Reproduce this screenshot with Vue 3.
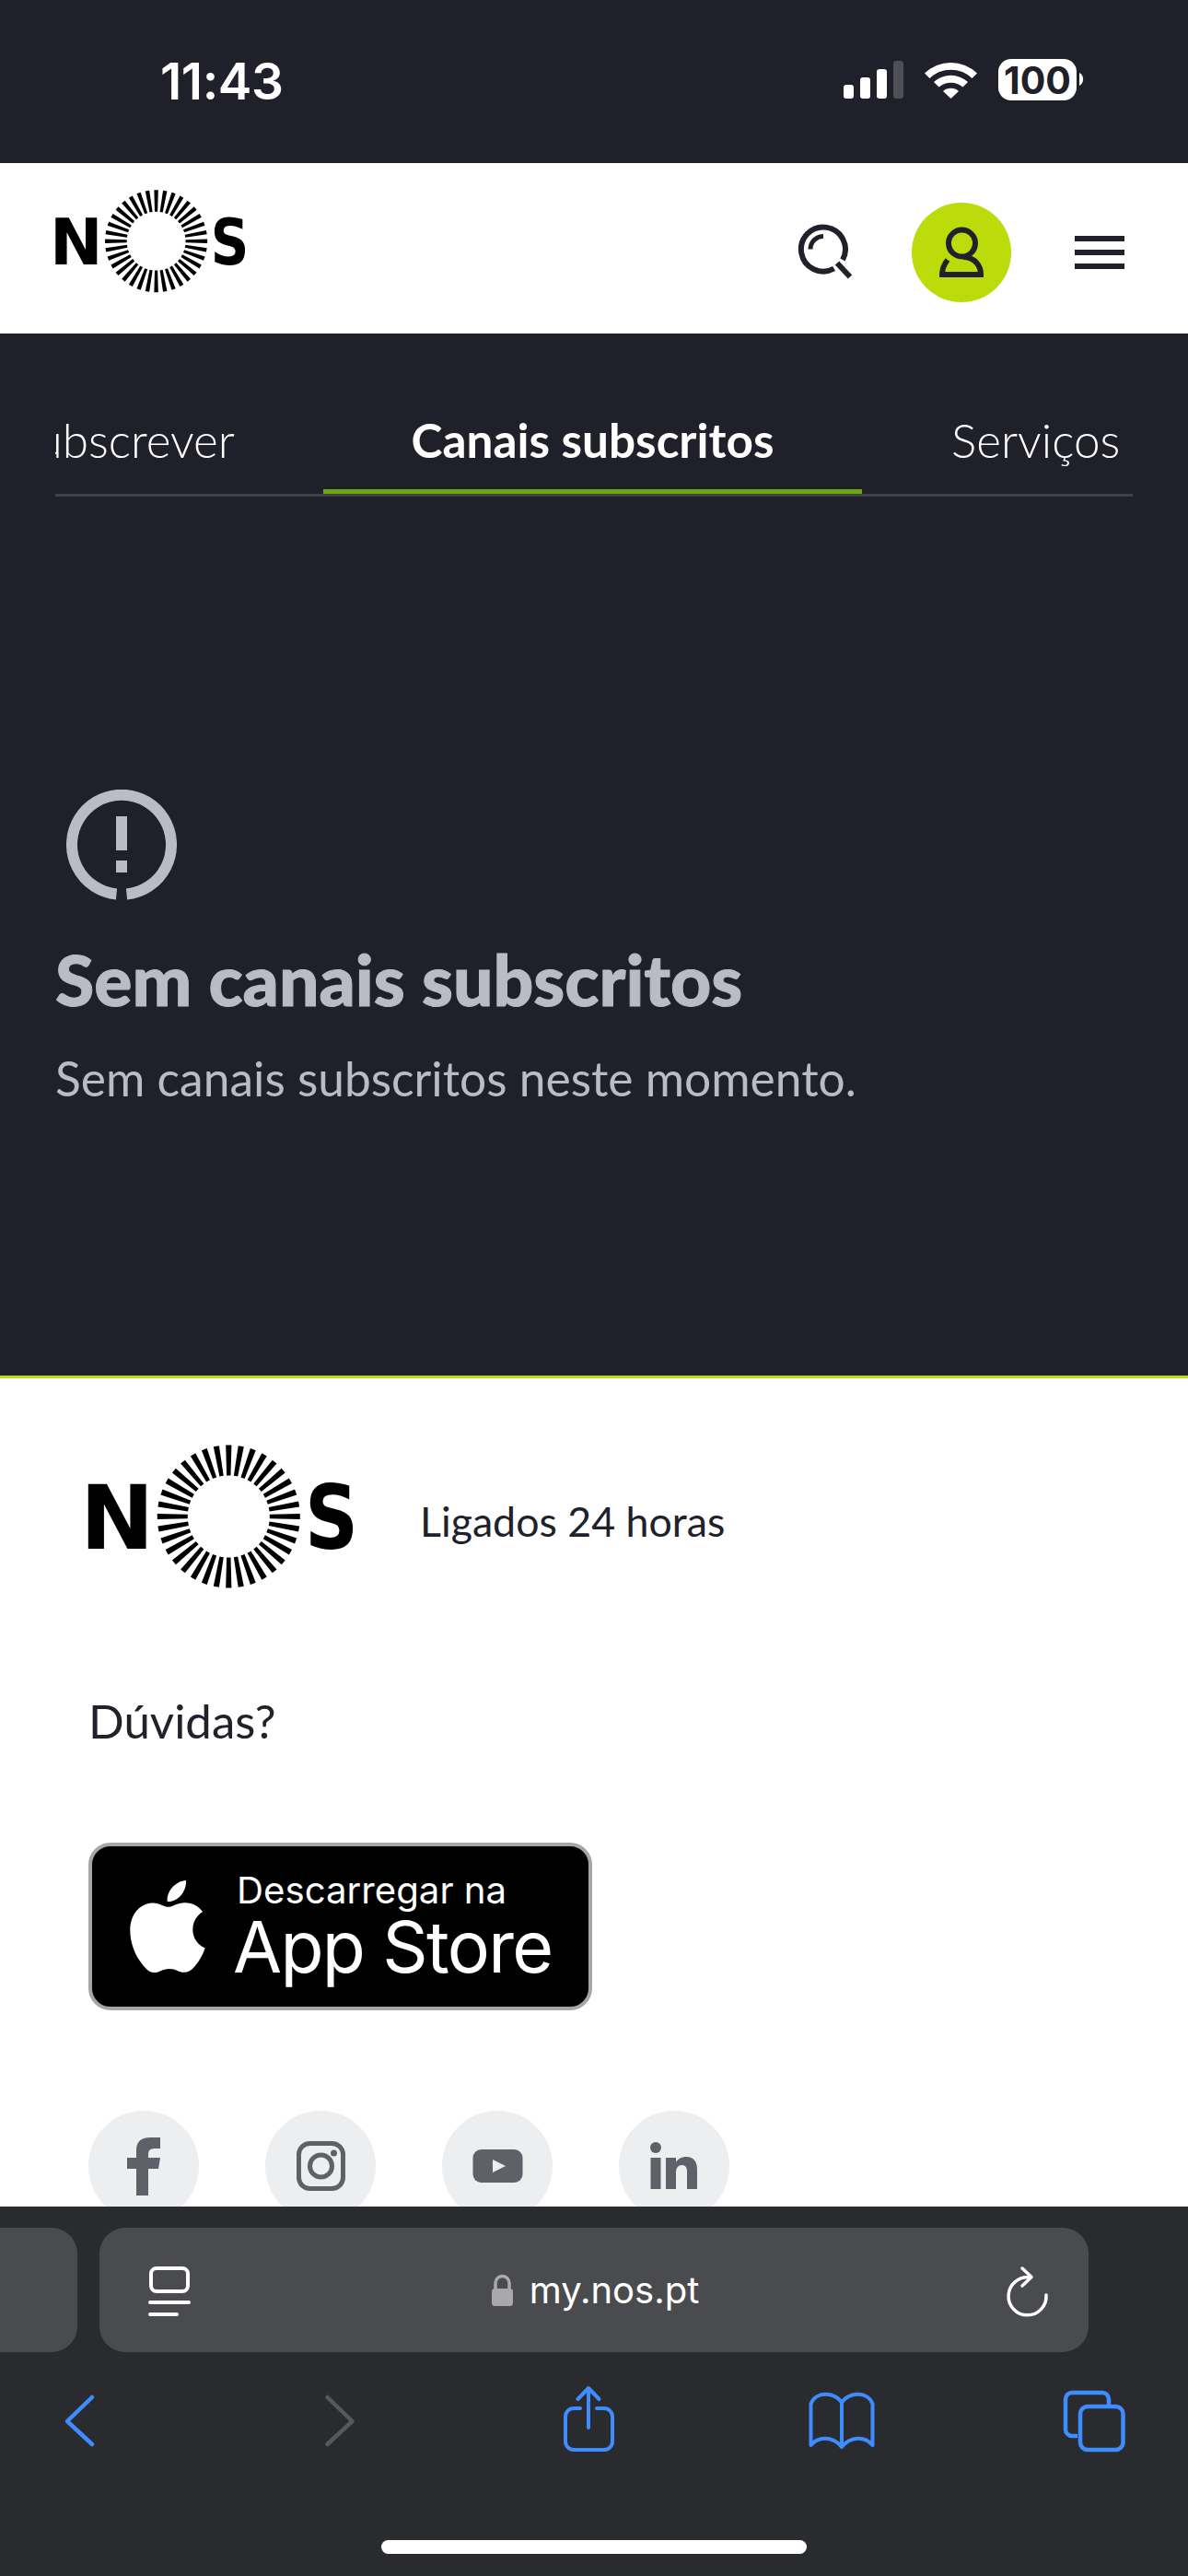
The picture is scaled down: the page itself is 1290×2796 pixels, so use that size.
<script setup>
const cx = 248.3
const cy = 1646
const count = 36
const rays = Array.from({ length: count }, (_, i) => {
  const a = (i * 2 * Math.PI) / count
  const pt = (r, w) => {
    const x = cx + Math.sin(a) * r + Math.cos(a) * w
    const y = cy - Math.cos(a) * r + Math.sin(a) * w
    return x.toFixed(2) + ',' + y.toFixed(2)
  }
  return [pt(44.5, -2.2), pt(77.5, -3.1), pt(77.5, 3.1), pt(44.5, 2.2)].join(' ')
})
const socials = ['facebook', 'instagram', 'youtube', 'linkedin']
</script>

<template>
  <div class="page">
    <div class="status">
      <span class="time">11:43</span>
      <svg class="status-icons" viewBox="910 60 270 52" width="270" height="52">
        <rect x="916" y="92" width="11" height="15" rx="3" fill="#fff" />
        <rect x="934" y="84" width="11" height="23" rx="3" fill="#fff" />
        <rect x="952" y="75" width="11" height="32" rx="3" fill="#fff" />
        <rect x="970" y="66" width="11" height="41" rx="3" fill="#4e4f54" />
        <path d="M1004 79.5A41 41 0 0 1 1061 79.5L1055.500 85A33 33 0 0 0 1009.500 85Z" fill="#fff" />
        <path d="M1014 89A27.500 27.500 0 0 1 1051 89L1045.500 94.500A20 20 0 0 0 1019.500 94.500Z" fill="#fff" />
        <path d="M1024 99A13 13 0 0 1 1041 99L1032.500 107Z" fill="#fff" />
        <rect x="1084" y="64" width="85" height="45" rx="14" fill="#fff" />
        <path d="M1172 79A8 8 0 0 1 1172 93Z" fill="#fff" />
        <text x="1126.500" y="101.500" text-anchor="middle" class="battery-text">100</text>
      </svg>
    </div>

    <header class="topbar">
      <svg class="logo logo-small" viewBox="80 1560 320 170">
        <text x="87" y="1681" class="logo-letter">N</text>
        <polygon v-for="(r, i) in rays" :key="i" :points="r" fill="#000" />
        <text x="331" y="1681" class="logo-letter" textLength="58" lengthAdjust="spacingAndGlyphs">S</text>
      </svg>
      <div class="top-actions">
        <svg class="search" viewBox="860 238 70 70" width="70" height="70" fill="none" stroke="#20212b" stroke-width="6">
          <path d="M915 282A24 24 0 1 0 905.600 291.500" />
          <path d="M880 270.500A14 14 0 0 1 894 256.500" stroke-width="5" />
          <path d="M909 285.500L923 300.500" />
        </svg>
        <div class="avatar">
          <svg viewBox="990 220 108 108" width="108" height="108" fill="none" stroke="#20212b" stroke-width="6">
            <circle cx="1044.500" cy="264" r="14.500" />
            <path d="M1046 279C1058 279 1065 288 1065 298H1023C1023 292 1025 287 1029 282" />
          </svg>
        </div>
        <div class="burger"><i></i><i></i><i></i></div>
      </div>
    </header>

    <main class="main">
      <nav class="tabs">
        <div class="tab tab-first"><span>Por subscrever</span></div>
        <div class="tab tab-active"><span>Canais subscritos</span></div>
        <div class="tab"><span>Serviços</span></div>
      </nav>
      <svg class="alert" viewBox="72 857 120 120" width="120" height="120" fill="none" stroke="#babbc5" stroke-width="12">
        <path d="M126.500 970.500A54 54 0 1 1 137.500 970.500" />
        <rect x="126" y="886" width="12" height="37" fill="#babbc5" stroke="none" />
        <rect x="126" y="934" width="12" height="13" fill="#babbc5" stroke="none" />
      </svg>
      <h2 class="empty-title">Sem canais subscritos</h2>
      <p class="empty-text">Sem canais subscritos neste momento.</p>
    </main>

    <footer class="footer">
      <div class="brand">
        <svg class="logo logo-large" viewBox="80 1560 320 170">
          <text x="87" y="1681" class="logo-letter">N</text>
          <polygon v-for="(r, i) in rays" :key="i" :points="r" fill="#000" />
          <text x="331" y="1681" class="logo-letter" textLength="58" lengthAdjust="spacingAndGlyphs">S</text>
        </svg>
        <span class="tagline">Ligados 24 horas</span>
      </div>
      <div class="help">Dúvidas?</div>
      <div class="store">
        <svg viewBox="0 0 814 1000" width="82" height="100" fill="#fff">
          <path d="M788.1 340.9c-5.8 4.5-108.2 62.2-108.2 190.5 0 148.400 130.300 200.900 134.200 202.200-.6 3.200-20.700 71.900-68.700 141.900-42.800 61.600-87.500 123.100-155.500 123.100s-85.500-39.500-164-39.500c-76.500 0-103.700 40.800-165.900 40.800s-105.600-57-155.500-127C46.700 790.700 0 663 0 541.800c0-194.400 126.400-297.500 250.800-297.500 66.100 0 121.200 43.400 162.700 43.400 39.500 0 101.100-46 176.300-46 28.500 0 130.900 2.600 198.300 99.200zm-234-181.500c31.100-36.900 53.100-88.100 53.100-139.300 0-7.100-.6-14.300-1.900-20.100-50.600 1.900-110.800 33.700-147.100 75.800-28.500 32.400-55.100 83.600-55.100 135.500 0 7.800 1.300 15.600 1.900 18.100 3.200.6 8.400 1.300 13.600 1.300 45.400 0 102.500-30.400 135.500-71.300z" />
        </svg>
        <div class="store-text">
          <span class="store-small">Descarregar na</span>
          <span class="store-big">App Store</span>
        </div>
      </div>
      <div class="socials">
        <div v-for="s in socials" :key="s" class="social">
          <svg v-if="s === 'facebook'" viewBox="96 2291 120 120" width="120" height="120" fill="#5f6068">
            <path d="M148 2383V2354H138V2342H148V2334Q148 2320 163 2320H174V2332H167Q161 2332 161 2338V2342H174L172 2354H161V2383Z" />
          </svg>
          <svg v-else-if="s === 'instagram'" viewBox="288 2291 120 120" width="120" height="120" fill="none" stroke="#5f6068" stroke-width="5">
            <rect x="324.500" y="2326.500" width="48" height="49" rx="12" />
            <circle cx="348.500" cy="2351" r="12" />
            <circle cx="362.500" cy="2337" r="3.500" fill="#5f6068" stroke="none" />
          </svg>
          <svg v-else-if="s === 'youtube'" viewBox="480 2291 120 120" width="120" height="120">
            <rect x="513.500" y="2333" width="54" height="36" rx="9" fill="#5f6068" />
            <path d="M535 2344L549 2351L535 2358Z" fill="#edeef0" />
          </svg>
          <svg v-else viewBox="672 2291 120 120" width="120" height="120" fill="#5f6068">
            <circle cx="712" cy="2331" r="6" />
            <rect x="706.500" y="2342" width="11" height="34" />
            <path d="M723 2342H734V2347C736 2343 741 2341 745 2341C753 2341 757 2346 757 2355V2376H746V2357C746 2352 744 2350 740.500 2350C736.500 2350 734 2353 734 2358V2376H723Z" />
          </svg>
        </div>
      </div>
    </footer>

    <div class="browser">
      <div class="address-row">
        <div class="prev-tab"></div>
        <div class="address">
          <svg viewBox="150 2445 70 80" width="70" height="80" fill="none" stroke="#fff" stroke-width="4" stroke-linecap="round">
            <rect x="164" y="2461" width="40" height="25" rx="6" />
            <path d="M163 2498H205" />
            <path d="M163 2511H192" />
          </svg>
          <div class="url">
            <svg viewBox="530 2464 30 38" width="30" height="38">
              <path d="M537 2482V2475A7.500 7.500 0 0 1 552 2475V2482" fill="none" stroke="#a9a9ad" stroke-width="3.500" />
              <rect x="533" y="2481" width="23" height="19" rx="3.500" fill="#a9a9ad" />
            </svg>
            <span>my.nos.pt</span>
          </div>
          <svg viewBox="1086 2450 60 64" width="60" height="64" fill="none" stroke="#fff" stroke-width="3.500" stroke-linecap="round" stroke-linejoin="round">
            <path d="M1118 2468A20.500 20.500 0 1 0 1136 2487" />
            <path d="M1110 2458L1120 2467.500L1110 2477" />
          </svg>
        </div>
      </div>
      <div class="nav-row">
        <svg viewBox="46 2588 80 80" width="80" height="80" fill="none" stroke="#3f8cff" stroke-width="4.500" stroke-linecap="round" stroke-linejoin="round">
          <path d="M100 2602L73 2628L100 2653" />
        </svg>
        <svg viewBox="321.500 2588 80 80" width="80" height="80" fill="none" stroke="#57585c" stroke-width="4.500" stroke-linecap="round" stroke-linejoin="round">
          <path d="M355 2602L382 2628L355 2653" />
        </svg>
        <svg viewBox="597 2588 80 80" width="80" height="80" fill="none" stroke="#3f8cff" stroke-width="4" stroke-linecap="round" stroke-linejoin="round">
          <path d="M630 2614H623A9 9 0 0 0 614 2623V2650A9 9 0 0 0 623 2659H656A9 9 0 0 0 665 2650V2623A9 9 0 0 0 656 2614H648" />
          <path d="M639 2635V2593" />
          <path d="M627.500 2604L639 2592L650.500 2604" />
        </svg>
        <svg viewBox="872.500 2588 80 80" width="80" height="80" fill="none" stroke="#3f8cff" stroke-width="4" stroke-linecap="round" stroke-linejoin="round">
          <path d="M913.500 2608V2655" />
          <path d="M913.500 2608C908 2597 886 2594 880 2609V2654C888 2644 904 2644 913.500 2656C923 2644 939 2644 947 2654V2609C941 2594 919 2597 913.500 2608Z" />
        </svg>
        <svg viewBox="1148 2588 80 80" width="80" height="80" fill="none" stroke="#3f8cff" stroke-width="4.500" stroke-linejoin="round">
          <path d="M1170 2644H1164A7 7 0 0 1 1157 2637V2604A7 7 0 0 1 1164 2597H1197A7 7 0 0 1 1204 2604V2611" />
          <rect x="1173" y="2612" width="46.500" height="47" rx="8" />
        </svg>
      </div>
      <div class="home-indicator"></div>
    </div>
  </div>
</template>

<style>
html,
body {
  margin: 0;
  background: #1f2029;
}
</style>

<style scoped>
.page {
  width: 1290px;
  height: 2796px;
  overflow: hidden;
  font-family: Lato, "Open Sans", sans-serif;
  background: #1f2029;
}
svg {
  display: block;
  flex-shrink: 0;
}
.status {
  height: 177px;
  box-sizing: border-box;
  display: flex;
  justify-content: space-between;
  padding: 60px 110px 0 174px;
  background: #1f2029;
}
.time {
  font-family: Inter, sans-serif;
  font-size: 55px;
  font-weight: 600;
  line-height: 56px;
  color: #fff;
  letter-spacing: -0.4px;
}
.battery-text {
  font-family: Inter, sans-serif;
  font-size: 41px;
  font-weight: 700;
  fill: #1f2029;
}
.topbar {
  height: 185px;
  box-sizing: border-box;
  background: #fff;
  display: flex;
  justify-content: space-between;
  padding: 23px 69px 0 49.4px;
}
.logo-small {
  width: 229.3px;
  height: 122px;
}
.logo-large {
  width: 320px;
  height: 170px;
}
.logo-letter {
  font-family: "DejaVu Sans", sans-serif;
  font-weight: 700;
  font-size: 96px;
  fill: #000;
}
.top-actions {
  display: flex;
  align-items: flex-start;
}
.search {
  margin-top: 38px;
}
.avatar {
  width: 108px;
  height: 108px;
  border-radius: 50%;
  background: #bcdb0a;
  margin-top: 20px;
  margin-left: 60px;
}
.burger {
  width: 54px;
  margin-left: 69px;
  margin-top: 56px;
  display: flex;
  flex-direction: column;
  gap: 9px;
}
.burger i {
  display: block;
  height: 6px;
  background: #20212b;
}
.main {
  height: 1134px;
  box-sizing: border-box;
  background: #1f2029;
  padding: 68px 60px 0;
  border-bottom: 3px solid #bcdb0a;
}
.tabs {
  display: flex;
  height: 109px;
  box-sizing: border-box;
  border-bottom: 3px solid #3f4048;
  overflow: hidden;
  font-size: 51.3px;
  line-height: 60px;
  color: #fff;
  white-space: nowrap;
}
.tab {
  flex-shrink: 0;
  box-sizing: border-box;
  height: 106px;
  padding: 17px 97px 0;
  font-weight: 300;
}
.tab-first {
  width: 291px;
  padding: 17px 96px 0 0;
  display: flex;
  justify-content: flex-end;
}
.tab-active {
  width: 585px;
  font-weight: 700;
  border-bottom: 5px solid #6ea611;
  text-align: center;
  padding: 17px 0 0;
}
.alert {
  margin-top: 318px;
  margin-left: 12px;
}
.empty-title {
  margin: 43px 0 0;
  font-size: 76.8px;
  line-height: 84px;
  font-weight: 900;
  color: #babbc5;
  -webkit-text-stroke: 1px #babbc5;
}
.empty-text {
  margin: 36px 0 0;
  font-size: 51.5px;
  line-height: 60px;
  font-weight: 400;
  color: #babbc5;
}
.footer {
  height: 899px;
  box-sizing: border-box;
  background: #fff;
  overflow: hidden;
  padding: 64px 0 0 96px;
  color: #20212b;
}
.brand {
  display: flex;
  align-items: center;
  margin-left: -16px;
  gap: 56px;
}
.tagline {
  font-size: 44.7px;
  line-height: 52px;
  margin-top: 12px;
}
.help {
  margin-top: 108px;
  font-size: 51px;
  line-height: 60px;
}
.store {
  margin-top: 102px;
  width: 547px;
  height: 182px;
  box-sizing: border-box;
  background: #000;
  border: 4px solid #a6a6a6;
  border-radius: 24px;
  display: flex;
  align-items: center;
  gap: 30px;
  padding: 0 0 0 41px;
  font-family: Inter, sans-serif;
  color: #fff;
}
.store-text {
  display: flex;
  flex-direction: column;
}
.store-small {
  font-size: 40.2px;
  line-height: 44px;
  margin-left: 4px;
}
.store-big {
  font-size: 77px;
  line-height: 78px;
  letter-spacing: -1.7px;
}
.socials {
  display: flex;
  gap: 72px;
  margin-top: 109px;
}
.social {
  width: 120px;
  height: 120px;
  border-radius: 50%;
  background: #edeef0;
}
.browser {
  height: 401px;
  box-sizing: border-box;
  background: #2a2b2f;
  padding-top: 23px;
  display: flex;
  flex-direction: column;
}
.address-row {
  display: flex;
  gap: 24px;
}
.prev-tab {
  width: 84px;
  height: 135px;
  background: #4a4b4f;
  border-radius: 0 28px 28px 0;
}
.address {
  width: 1074px;
  height: 135px;
  background: #4a4b4f;
  border-radius: 28px;
  display: flex;
  align-items: center;
  justify-content: space-between;
  box-sizing: border-box;
  padding: 0 36px 0 42px;
}
.url {
  display: flex;
  align-items: center;
  gap: 14px;
  margin-right: 16px;
  color: #fff;
  font-family: Inter, sans-serif;
  font-size: 40px;
}
.nav-row {
  margin-top: 35px;
  display: flex;
  justify-content: space-between;
  padding: 0 62px 0 46px;
}
.home-indicator {
  width: 462px;
  height: 15px;
  border-radius: 8px;
  background: #fff;
  margin: 89px auto 0;
}
</style>
